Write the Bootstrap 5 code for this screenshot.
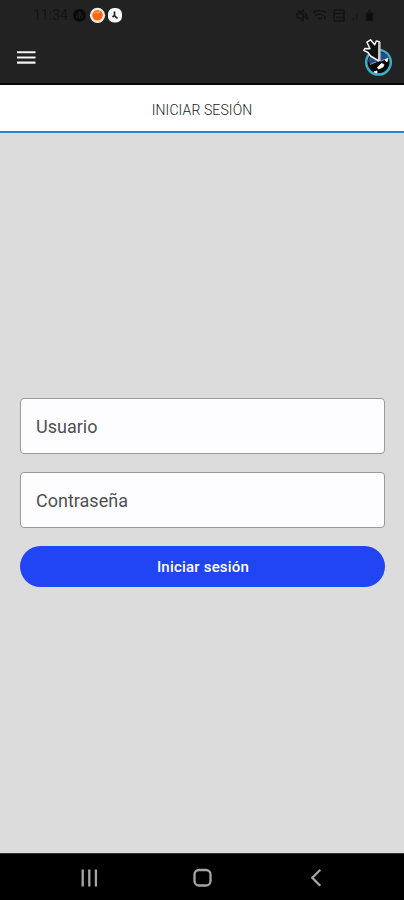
<!DOCTYPE html>
<html lang="es">
<head>
<meta charset="utf-8">
<meta name="viewport" content="width=device-width, initial-scale=1">
<title>Iniciar sesión</title>
<link href="https://cdn.jsdelivr.net/npm/bootstrap@5.3.0/dist/css/bootstrap.min.css" rel="stylesheet">
<style>
body{font-family:Roboto,"Liberation Sans",sans-serif;background:#dcdcdc;height:900px;overflow:hidden}
.top-area{background:#222;height:85px;border-bottom:2px solid #050505}
.status{height:30px;padding:0 29px 0 33px;color:#141414;font-size:14px}
.status svg{display:block}
.app-row{height:53px;padding:0 10px 0 17px}
.tab-head{height:48px;background:#fff;border-bottom:2px solid #2b83c9;color:#222;font-size:14px;font-weight:300;letter-spacing:.1px;padding-top:4px}
.login{padding:265px 19px 0 20px}
.login .form-control{height:56px;border:1px solid #999;border-radius:4px;background:#fdfcff;padding:1px 15px 0;font-size:18px;color:#49484c;margin-bottom:18px}
.login .form-control::placeholder{color:#505053;opacity:1}
.login .btn{height:41px;background:#2144f5;color:#fff;font-size:15px;font-weight:500;letter-spacing:.2px;padding:2px 0 0 1px}
.sysnav{height:47px;background:#000;border-top:1px solid #333}
</style>
<script src="https://cdn.jsdelivr.net/npm/bootstrap@5.3.0/dist/js/bootstrap.bundle.min.js"></script>
</head>
<body class="d-flex flex-column">
<header class="top-area flex-shrink-0">
  <div class="status d-flex align-items-center justify-content-between">
    <div class="d-flex align-items-center"><span class="clock">11:34</span>
      <svg class="ms-1" width="52" height="18" viewBox="72 6 52 18">
        <circle cx="79.5" cy="15.3" r="6.5" fill="#0b0b0b"/><path d="M76.5 18l3-6 3 6M79.5 15v3" stroke="#252525" fill="none"/>
        <circle cx="97.5" cy="15.3" r="7.6" fill="#f8eee5"/><circle cx="97.5" cy="15.3" r="5.3" fill="#ff6712"/><path d="M94 13.5q3-2.5 4-.5l2-1.5" stroke="#ff9b50" stroke-width="1.5" fill="none"/>
        <rect x="108" y="8" width="14" height="14.6" rx="6" fill="#f8f8f8"/><path d="M114.5 11.5v4l3 3M114.500 15.500l-2 1.500" stroke="#222" stroke-width="1.7" fill="none"/>
      </svg>
    </div>
    <svg width="80" height="16" viewBox="295 6.500 80 16" fill="none" stroke="#141414" stroke-width="1.6">
      <path d="M297 13h2l4-3v10l-4-3h-2zM305 12l3 6M298 10l10 9"/>
      <path d="M313 12q6-4 13 0M315 15q5-3 8 0M318 18h4M325 15v4"/>
      <path d="M334 9.5h10v11h-10zM334 13h10M336 17h7"/><path d="M353 20v-3M357 20v-6" stroke="#1b1b1b"/>
      <path d="M366.5 12.5h6v7.500h-6zM368 10.500h3" fill="#0d0d0d"/>
    </svg>
  </div>
  <div class="app-row d-flex align-items-center justify-content-between">
    <svg width="19" height="14" viewBox="0 0 19 14" stroke="#f2f2f2" stroke-width="2.1"><path d="M0 2.200h18.500M0 7.500h18.500M0 12.600h18.500"/></svg>
    <svg width="34" height="42" viewBox="360 36 34 42">
      <circle cx="378.500" cy="62.300" r="12.300" fill="#080808" stroke="#3cacc8" stroke-width="2.500"/>
      <path d="M368 60q2-5 7-6l3 8-8 2zM380 52q7 1 9 6l-9 4z" fill="#294a85"/>
      <path d="M370 64.500l6-2.500M381 61l5-2" stroke="#9bb7c7" stroke-width=".8" fill="none"/>
      <path d="M377.500 67.500l4-4 2.500 1-1 2.500-4.500 2zM385 60l3-2-1 4zM374 72l3-1v2z" fill="#fff" stroke="#fff" stroke-width=".8"/>
      <path d="M378.800 61L370.500 56l-2.500-3.500-4.200-2.200 1.200-1.800 5 .3-3-6.600 3.500-2.400 4.200 5 1.600-3.800 3 .8z" fill="#101010" stroke="#f6f6f6" stroke-width="1.500" stroke-linejoin="round"/>
      <path d="M379.500 42v19" stroke="#c4ccd3" stroke-width="2.200"/>
    </svg>
  </div>
</header>
<div class="tab-head d-flex align-items-center justify-content-center flex-shrink-0">INICIAR SESIÓN</div>
<main class="flex-grow-1">
  <form class="login">
    <input class="form-control" type="text" placeholder="Usuario" aria-label="Usuario">
    <input class="form-control" type="password" placeholder="Contraseña" aria-label="Contraseña">
    <button class="btn rounded-pill w-100 border-0" type="button">Iniciar sesión</button>
  </form>
</main>
<footer class="sysnav d-flex align-items-center justify-content-center flex-shrink-0">
  <svg width="290" height="46" viewBox="57 854 290 46" fill="none" stroke="#a5a5a5" stroke-width="2.300">
    <path d="M82.700 869.500v17M89.300 869.500v17M95.900 869.500v17"/>
    <rect x="194.500" y="870" width="16" height="15.500" rx="4.500"/>
    <path d="M320.300 869.800l-8 8 8 8"/>
  </svg>
</footer>
</body>
</html>
